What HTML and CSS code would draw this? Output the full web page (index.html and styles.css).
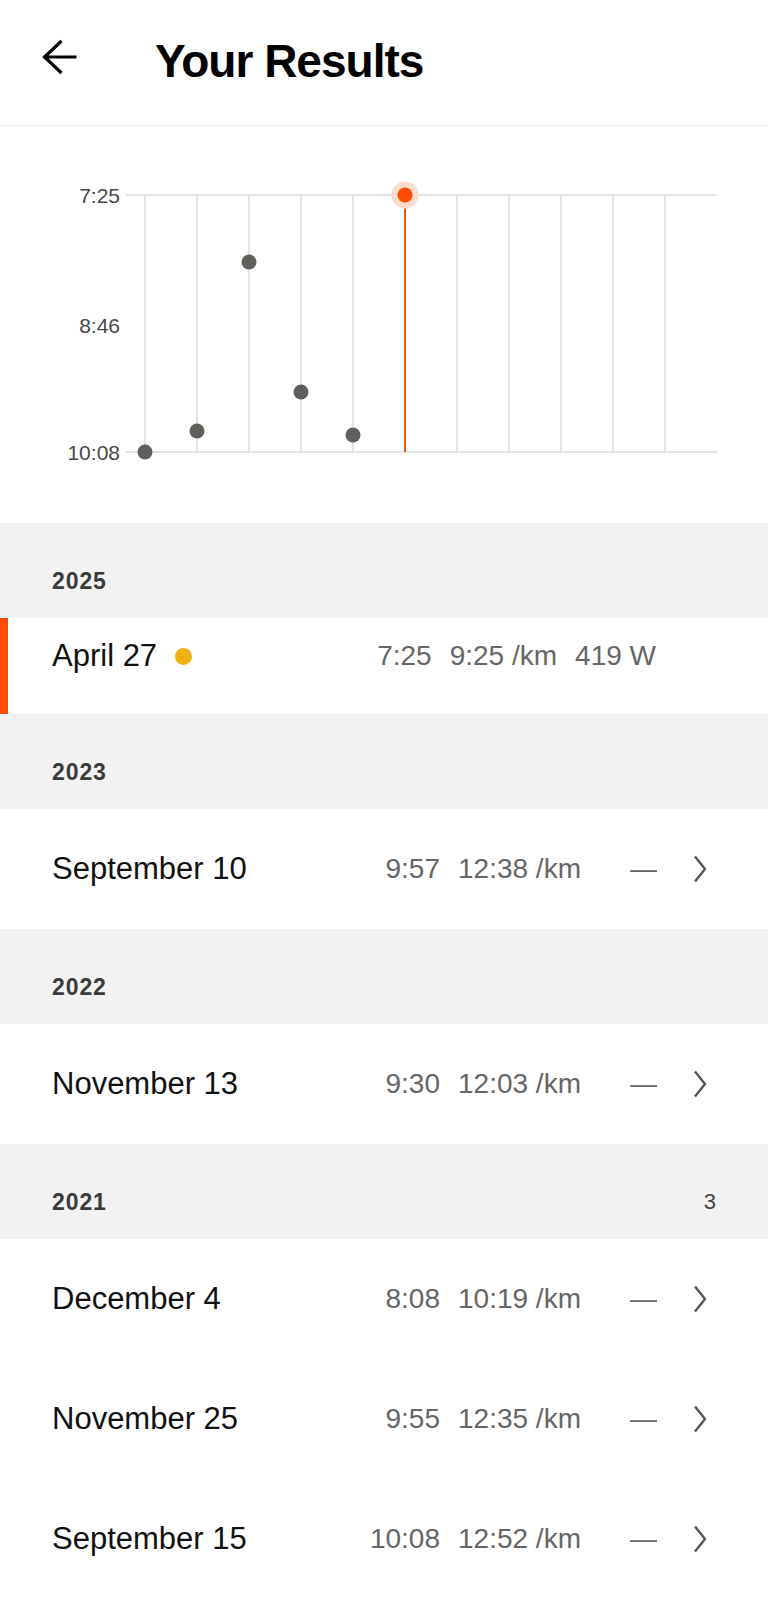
FILE: index.html
```html
<!DOCTYPE html>
<html lang="en">
<head>
<meta charset="utf-8">
<title>Your Results</title>
<link rel="stylesheet" href="styles.css">
</head>
<body>
<header class="topbar">
  <svg class="back" viewBox="0 0 36 36" width="36" height="36" aria-hidden="true">
    <path d="M34.5 18 H3 M19.5 2 L2.5 18 L19.5 34" fill="none" stroke="#000" stroke-width="3.2" stroke-linecap="butt" stroke-linejoin="miter"/>
  </svg>
  <h1 class="title">Your Results</h1>
</header>

<section class="chart">
  <svg viewBox="0 0 768 397" width="768" height="397" aria-hidden="true">
    <g stroke="#e3e3e3" stroke-width="2">
      <line x1="126" y1="69" x2="717" y2="69"/>
      <line x1="126" y1="326" x2="717" y2="326"/>
      <line x1="145" y1="69" x2="145" y2="326"/>
      <line x1="197" y1="69" x2="197" y2="326"/>
      <line x1="249" y1="69" x2="249" y2="326"/>
      <line x1="301" y1="69" x2="301" y2="326"/>
      <line x1="353" y1="69" x2="353" y2="326"/>
      <line x1="457" y1="69" x2="457" y2="326"/>
      <line x1="509" y1="69" x2="509" y2="326"/>
      <line x1="561" y1="69" x2="561" y2="326"/>
      <line x1="613" y1="69" x2="613" y2="326"/>
      <line x1="665" y1="69" x2="665" y2="326"/>
    </g>
    <line x1="405" y1="69" x2="405" y2="326" stroke="#f2530f" stroke-width="2"/>
    <g class="axis">
      <text x="120" y="76.5" text-anchor="end">7:25</text>
      <text x="120" y="206.5" text-anchor="end">8:46</text>
      <text x="120" y="333.5" text-anchor="end">10:08</text>
    </g>
    <g fill="#5f5f5c">
      <circle cx="145" cy="326" r="7.5"/>
      <circle cx="197" cy="305" r="7.5"/>
      <circle cx="249" cy="136" r="7.5"/>
      <circle cx="301" cy="266" r="7.5"/>
      <circle cx="353" cy="309" r="7.5"/>
    </g>
    <circle cx="405" cy="69" r="13.5" fill="#fcdccd"/>
    <circle cx="405" cy="69" r="7.5" fill="#fc4c02"/>
  </svg>
</section>

<div class="band"><span class="year">2025</span></div>
<div class="row row-current">
  <span class="date">April 27</span><span class="dot"></span>
  <div class="vals-current">
    <span>7:25</span><span>9:25 /km</span><span>419 W</span>
  </div>
</div>

<div class="band"><span class="year">2023</span></div>
<div class="row">
  <span class="date">September 10</span>
  <span class="time">9:57</span><span class="pace">12:38 /km</span><span class="dash">—</span>
  <svg class="chev" viewBox="0 0 14 30" width="14" height="30" aria-hidden="true"><path d="M2 2.5 L12 15 L2 27.5" fill="none" stroke="#555" stroke-width="2.4"/></svg>
</div>

<div class="band"><span class="year">2022</span></div>
<div class="row">
  <span class="date">November 13</span>
  <span class="time">9:30</span><span class="pace">12:03 /km</span><span class="dash">—</span>
  <svg class="chev" viewBox="0 0 14 30" width="14" height="30" aria-hidden="true"><path d="M2 2.5 L12 15 L2 27.5" fill="none" stroke="#555" stroke-width="2.4"/></svg>
</div>

<div class="band"><span class="year">2021</span><span class="count">3</span></div>
<div class="row">
  <span class="date">December 4</span>
  <span class="time">8:08</span><span class="pace">10:19 /km</span><span class="dash">—</span>
  <svg class="chev" viewBox="0 0 14 30" width="14" height="30" aria-hidden="true"><path d="M2 2.5 L12 15 L2 27.5" fill="none" stroke="#555" stroke-width="2.4"/></svg>
</div>
<div class="row">
  <span class="date">November 25</span>
  <span class="time">9:55</span><span class="pace">12:35 /km</span><span class="dash">—</span>
  <svg class="chev" viewBox="0 0 14 30" width="14" height="30" aria-hidden="true"><path d="M2 2.5 L12 15 L2 27.5" fill="none" stroke="#555" stroke-width="2.4"/></svg>
</div>
<div class="row">
  <span class="date">September 15</span>
  <span class="time">10:08</span><span class="pace">12:52 /km</span><span class="dash">—</span>
  <svg class="chev" viewBox="0 0 14 30" width="14" height="30" aria-hidden="true"><path d="M2 2.5 L12 15 L2 27.5" fill="none" stroke="#555" stroke-width="2.4"/></svg>
</div>
</body>
</html>
```
FILE: styles.css
```css
* { box-sizing: border-box; }
html, body {
  margin: 0;
  padding: 0;
  background: #fff;
  font-family: "Liberation Sans", Arial, sans-serif;
  color: #111;
}
body { width: 768px; overflow: hidden; }

.topbar {
  height: 126px;
  border-bottom: 1px solid #ececec;
  display: flex;
  align-items: flex-start;
  padding: 38px 0 0 42px;
}
.back { display: block; margin-top: 1px; flex: none; }
.title {
  margin: 0 0 0 77px;
  font-size: 46px;
  line-height: 46px;
  font-weight: 700;
  letter-spacing: -1px;
  color: #000;
}

.chart { height: 397px; }
.chart svg { display: block; }
.axis text {
  font-family: "Liberation Sans", Arial, sans-serif;
  font-size: 21px;
  fill: #484848;
}

.band {
  height: 95px;
  background: #f2f2f2;
  display: flex;
  align-items: flex-start;
  justify-content: space-between;
  padding: 46px 52px 0 52px;
}
.year {
  font-size: 23px;
  line-height: 24px;
  font-weight: 700;
  letter-spacing: 0.9px;
  color: #3a3a38;
}
.count {
  font-size: 22px;
  line-height: 24px;
  color: #444;
}

.row {
  height: 120px;
  display: flex;
  align-items: center;
  padding: 0 61px 0 52px;
  background: #fff;
}
.date {
  font-size: 31px;
  line-height: 40px;
  color: #111;
  white-space: nowrap;
}
.row .date { flex: 1; }
.time, .pace, .dash, .vals-current span {
  font-size: 28px;
  line-height: 40px;
  color: #666;
  white-space: nowrap;
}
.pace { width: 130px; margin-left: 18px; }
.dash { width: 27px; margin-left: 42px; overflow: hidden; }
.chev { display: block; margin-left: 36px; flex: none; }

.row-current {
  height: 96px;
  align-items: flex-start;
  padding: 18px 112px 0 52px;
  box-shadow: inset 8px 0 0 #fc4c02;
}
.row-current .date { flex: none; }
.dot {
  width: 17px;
  height: 17px;
  border-radius: 50%;
  background: #ecb011;
  margin: 12px 0 0 18px;
  flex: none;
}
.vals-current {
  margin-left: auto;
  display: flex;
  gap: 18px;
}
```
